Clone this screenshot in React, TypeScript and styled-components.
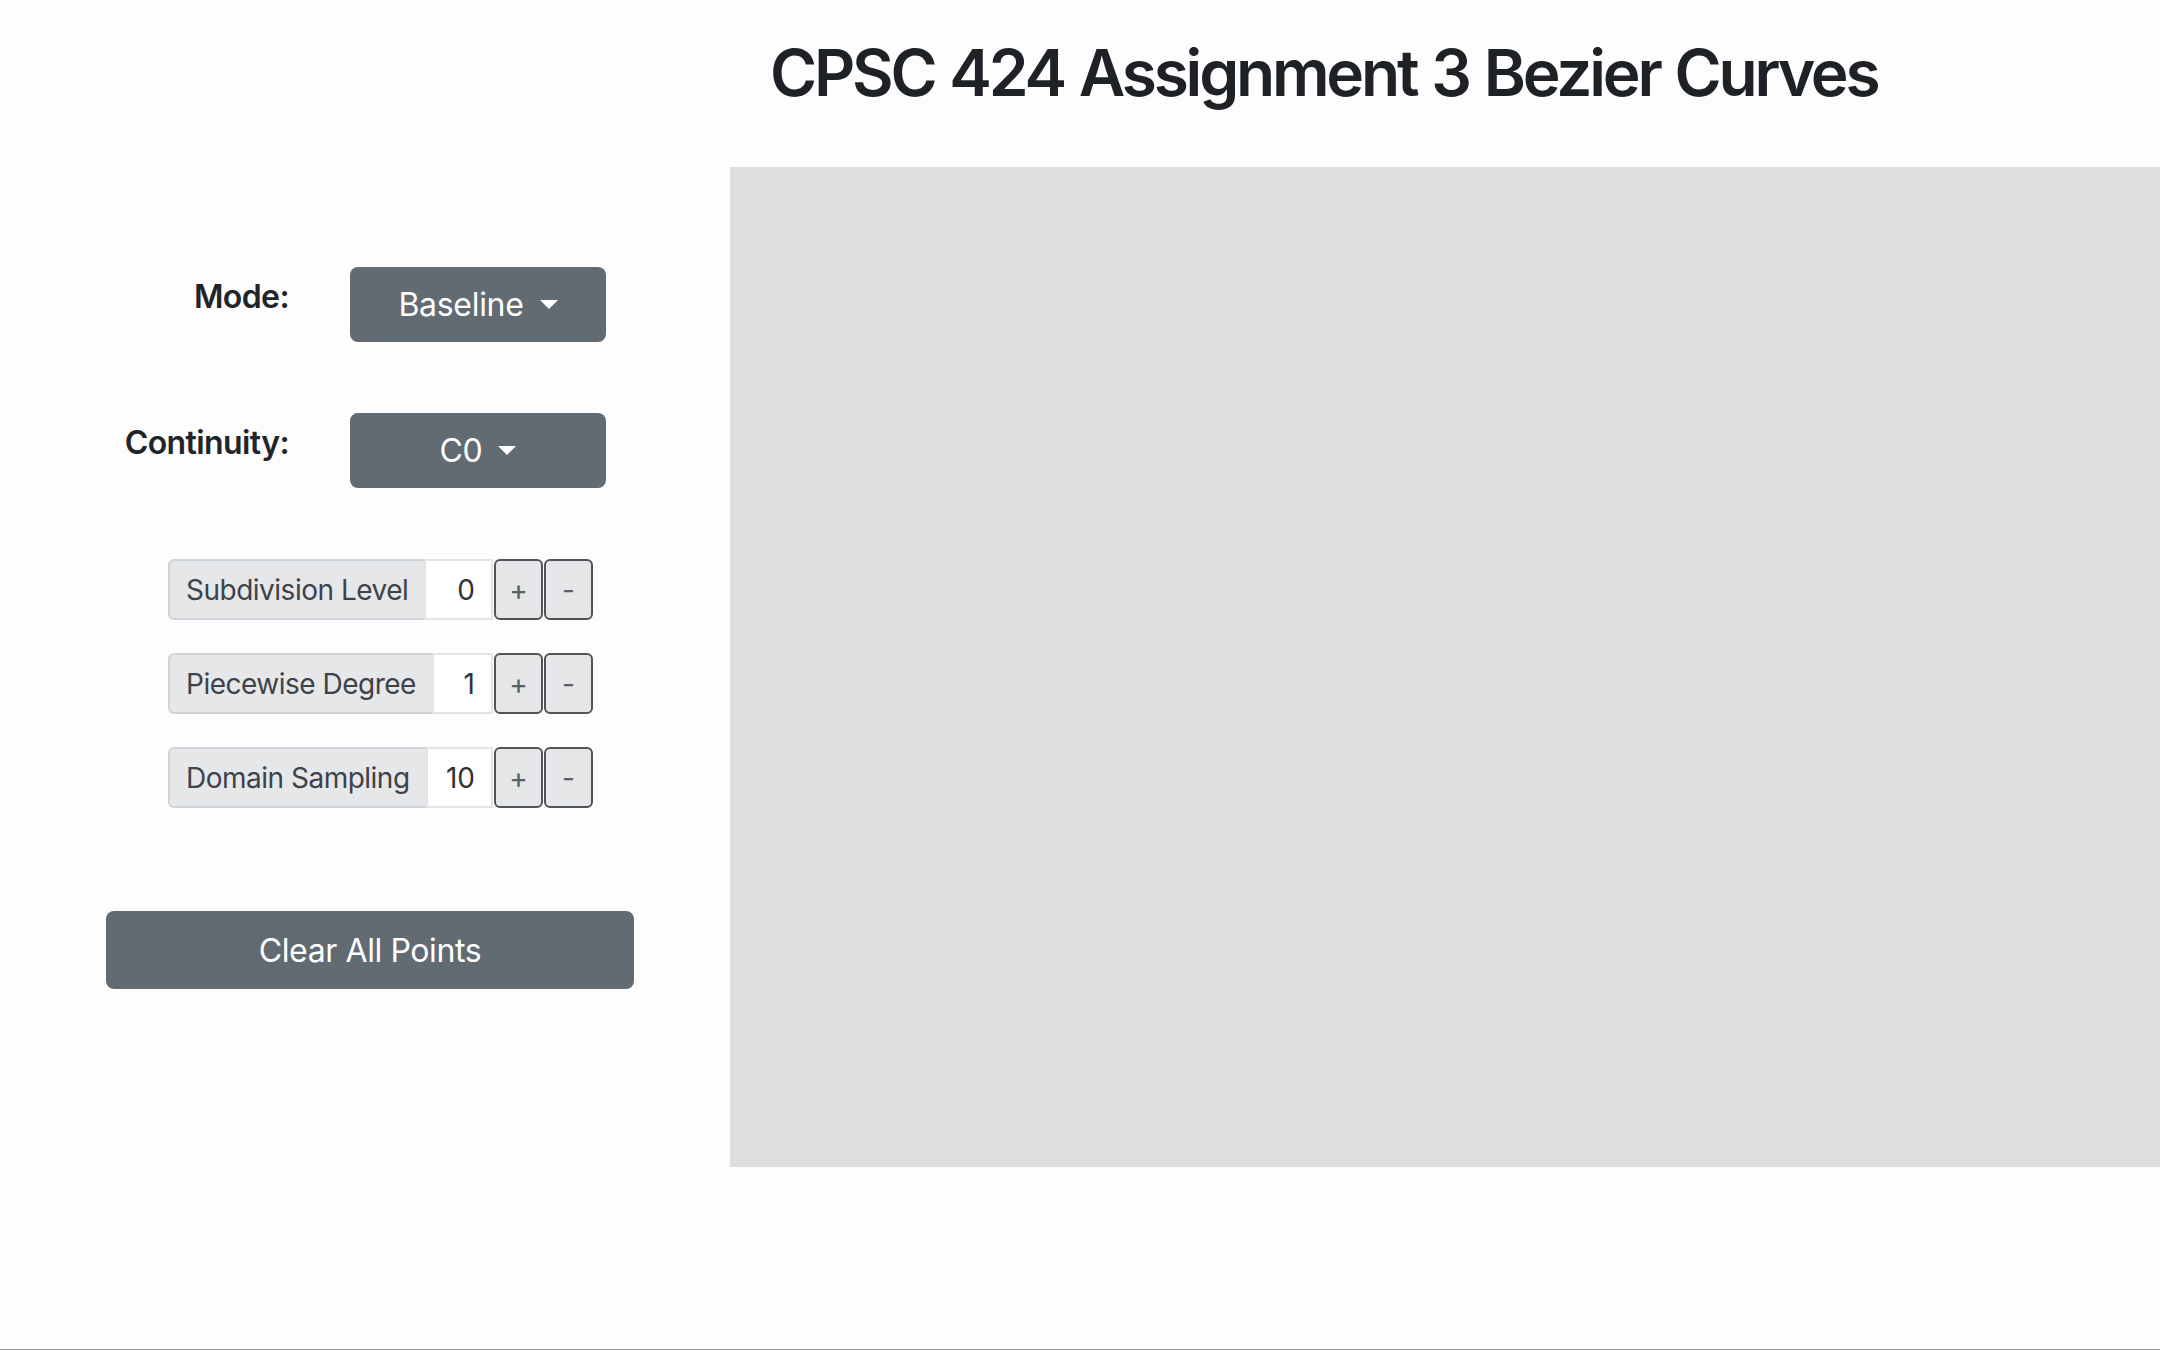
import styled, { createGlobalStyle } from "styled-components";

const GlobalStyle = createGlobalStyle`
  * {
    box-sizing: border-box;
  }
  body {
    margin: 0;
    background: #fdfdfd;
    color: #212529;
    font-family: Inter, "Noto Sans", "Liberation Sans", sans-serif;
  }
`;

export const Page = styled.div`
  display: flex;
  min-height: 1350px;
  border-bottom: 1px solid #9a9a9a;
`;

export const Sidebar = styled.aside`
  width: 730px;
  flex-shrink: 0;
  display: flex;
  flex-direction: column;
  align-items: flex-start;
  padding-top: 267px;
`;

export const Main = styled.main`
  flex: 1;
  display: flex;
  flex-direction: column;
`;

export const Title = styled.h1`
  margin: 35px 0 55px;
  padding-left: 40px;
  font-size: 64px;
  font-weight: 600;
  line-height: 1.2;
  letter-spacing: -3.2px;
  word-spacing: 2px;
  color: #1e2226;
`;

export const DrawArea = styled.div`
  width: 1430px;
  height: 1000px;
  background: #dedede;
`;

export const SelectRow = styled.div`
  display: flex;
  align-items: flex-start;
  gap: 61px;
  margin-bottom: 71px;
`;

export const RowLabel = styled.label`
  width: 289px;
  margin-top: 6px;
  text-align: right;
  font-size: 32px;
  font-weight: 600;
  line-height: 1.5;
  letter-spacing: -0.6px;
`;

export const DropButton = styled.button`
  width: 256px;
  height: 75px;
  display: flex;
  align-items: center;
  justify-content: center;
  border: none;
  border-radius: 8px;
  background: #626a72;
  color: #fff;
  font-family: inherit;
  font-size: 32px;
  font-weight: 400;
  letter-spacing: -0.3px;
  padding: 0 24px;

  &::after {
    content: "";
    display: inline-block;
    margin-left: 16px;
    border-top: 9.6px solid #fff;
    border-left: 9.6px solid transparent;
    border-right: 9.6px solid transparent;
  }
`;

export const Steppers = styled.div`
  display: flex;
  flex-direction: column;
  gap: 33px;
  margin-left: 168px;
`;

export const InputGroup = styled.div`
  display: flex;
  width: 425px;
  height: 61px;
  font-size: 28px;
`;

export const Addon = styled.span`
  display: flex;
  align-items: center;
  padding: 0 16px 0 16px;
  background: #e6e7e9;
  border: 2px solid #ced4da;
  border-right: none;
  border-radius: 6px 0 0 6px;
  color: #3d4349;
  letter-spacing: -0.5px;
  white-space: nowrap;
`;

export const Value = styled.span`
  flex: 1;
  display: flex;
  align-items: center;
  justify-content: flex-end;
  padding-right: 16px;
  background: #fff;
  border: 2px solid #e2e4e6;
  color: #333;
`;

export const StepButton = styled.button`
  width: 49px;
  margin-left: 1px;
  display: flex;
  align-items: center;
  justify-content: center;
  background: #e5e6e7;
  border: 2px solid #505458;
  border-radius: 6px;
  color: #5a5f64;
  font-family: inherit;
  font-size: 28px;
  padding: 0;
`;

export const ClearButton = styled.button`
  margin: 103px 0 0 106px;
  width: 528px;
  height: 78px;
  border: none;
  border-radius: 8px;
  background: #626a72;
  color: #fff;
  font-family: inherit;
  font-size: 32px;
  font-weight: 400;
  letter-spacing: -0.4px;
`;

const steppers = [
  { label: "Subdivision Level", value: "0" },
  { label: "Piecewise Degree", value: "1" },
  { label: "Domain Sampling", value: "10" },
];

const App = () => (
  <>
    <GlobalStyle />
    <Page>
      <Sidebar>
        <SelectRow>
          <RowLabel>Mode:</RowLabel>
          <DropButton>Baseline</DropButton>
        </SelectRow>
        <SelectRow>
          <RowLabel>Continuity:</RowLabel>
          <DropButton>C0</DropButton>
        </SelectRow>
        <Steppers>
          {steppers.map((s) => (
            <InputGroup key={s.label}>
              <Addon>{s.label}</Addon>
              <Value>{s.value}</Value>
              <StepButton>+</StepButton>
              <StepButton>-</StepButton>
            </InputGroup>
          ))}
        </Steppers>
        <ClearButton>Clear All Points</ClearButton>
      </Sidebar>
      <Main>
        <Title>CPSC 424 Assignment 3 Bezier Curves</Title>
        <DrawArea />
      </Main>
    </Page>
  </>
);

export default App;
